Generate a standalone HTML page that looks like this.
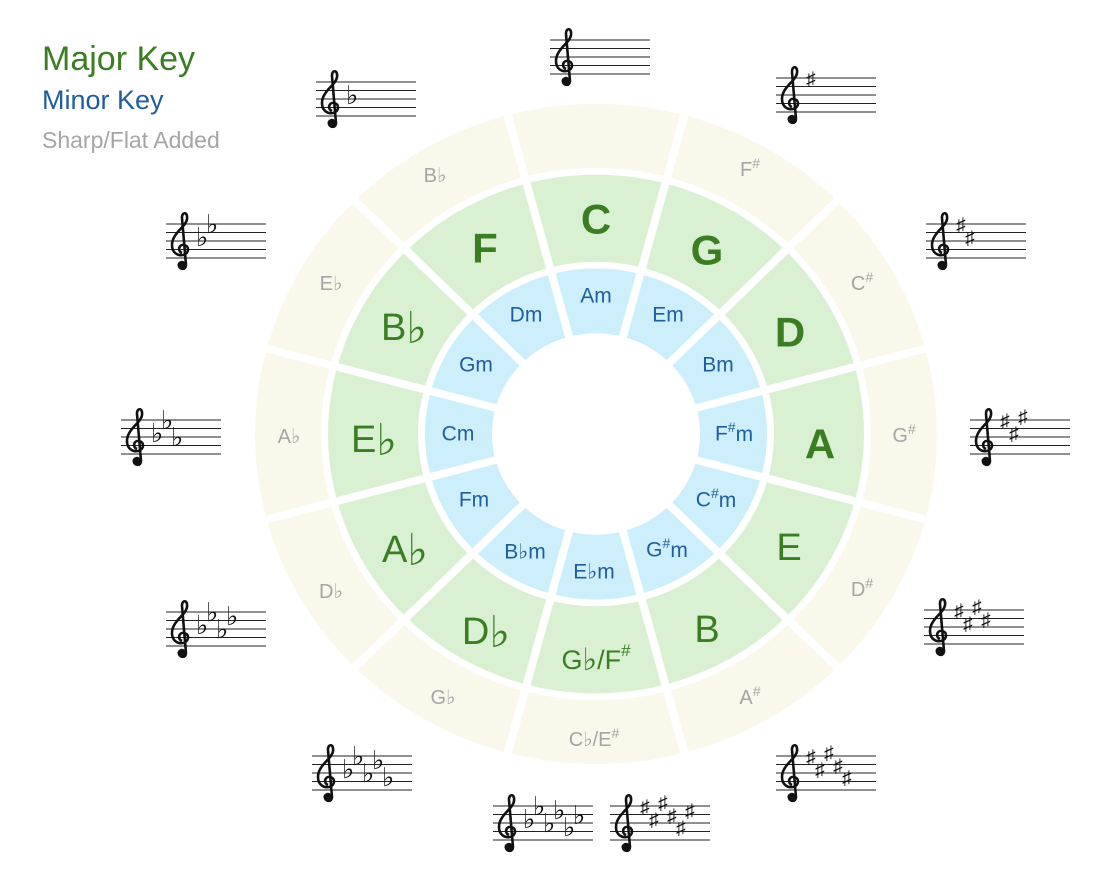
<!DOCTYPE html>
<html><head><meta charset="utf-8"><style>
html,body{margin:0;padding:0;background:#fff;}
body{width:1120px;height:879px;position:relative;overflow:hidden;font-family:"Liberation Sans","DejaVu Sans",sans-serif;}
.lg{position:absolute;left:42px;white-space:nowrap;}
svg text{font-family:"Liberation Sans","DejaVu Sans",sans-serif;}
</style></head><body>
<div class="lg" style="top:40px;font-size:34px;color:#3a7d22;">Major Key</div>
<div class="lg" style="top:85px;font-size:27px;color:#1f5e9e;">Minor Key</div>
<div class="lg" style="top:127px;font-size:23px;color:#a5a5a5;">Sharp/Flat Added</div>
<svg width="1120" height="879" style="position:absolute;left:0;top:0">
<defs>
<g id="staff">
<g stroke="#222" stroke-width="1.1"><line x1="0" y1="0" x2="100" y2="0"/><line x1="0" y1="8.5" x2="100" y2="8.5"/><line x1="0" y1="17" x2="100" y2="17"/><line x1="0" y1="25.5" x2="100" y2="25.5"/><line x1="0" y1="34" x2="100" y2="34"/></g>
<path d="M15 43 C18 44 20 41 18 39 C16 37 12 39 13 42 C14 46 20 46 20 41 L16 -6 C15.5 -12 22 -13 21 -5 C20 3 6 9 6 21 C6 29 12 32 17 31 C23 30 24 22 18 21 C13 20 11 27 16 29" fill="none" stroke="#111" stroke-width="2.6"/>
<circle cx="15.5" cy="42" r="3.2" fill="#111"/>
</g>
</defs>
<g transform="translate(596,434) scale(1,0.968)">
<circle r="341" fill="#faf8ea"/><circle r="275" fill="#fff"/>
<circle r="268" fill="#d9f1d2"/><circle r="178" fill="#fff"/>
<circle r="171" fill="#cdeefb"/><circle r="104" fill="#fff"/>
<g stroke="#fff" stroke-width="8">
<line x1="0" y1="-100" x2="0" y2="-350" transform="rotate(15)"/><line x1="0" y1="-100" x2="0" y2="-350" transform="rotate(45)"/><line x1="0" y1="-100" x2="0" y2="-350" transform="rotate(75)"/><line x1="0" y1="-100" x2="0" y2="-350" transform="rotate(105)"/><line x1="0" y1="-100" x2="0" y2="-350" transform="rotate(135)"/><line x1="0" y1="-100" x2="0" y2="-350" transform="rotate(165)"/><line x1="0" y1="-100" x2="0" y2="-350" transform="rotate(195)"/><line x1="0" y1="-100" x2="0" y2="-350" transform="rotate(225)"/><line x1="0" y1="-100" x2="0" y2="-350" transform="rotate(255)"/><line x1="0" y1="-100" x2="0" y2="-350" transform="rotate(285)"/><line x1="0" y1="-100" x2="0" y2="-350" transform="rotate(315)"/><line x1="0" y1="-100" x2="0" y2="-350" transform="rotate(345)"/>
</g>
</g>
<g fill="#3a7d22" text-anchor="middle" dominant-baseline="central">
<g font-size="42" font-weight="bold">
<text x="596" y="219">C</text><text x="707" y="250">G</text><text x="790" y="332">D</text><text x="820" y="444">A</text><text x="485" y="248">F</text>
</g>
<g font-size="38">
<text x="789" y="548">E</text><text x="707" y="630">B</text><text x="596" y="660" font-size="27">G<tspan font-family="DejaVu Sans" font-weight="bold" font-size="31">♭</tspan>/F<tspan font-size="17" dy="-10">#</tspan></text>
<text x="486" y="632">D<tspan font-family="DejaVu Sans" font-weight="bold" font-size="44">♭</tspan></text><text x="405" y="550">A<tspan font-family="DejaVu Sans" font-weight="bold" font-size="44">♭</tspan></text><text x="374" y="440">E<tspan font-family="DejaVu Sans" font-weight="bold" font-size="44">♭</tspan></text><text x="404" y="328">B<tspan font-family="DejaVu Sans" font-weight="bold" font-size="44">♭</tspan></text>
</g>
</g>
<g fill="#1f5e9e" text-anchor="middle" dominant-baseline="central" font-size="21">
<text x="596" y="296">Am</text><text x="668" y="315">Em</text><text x="718" y="365">Bm</text><text x="734" y="434">F<tspan font-size="14" dy="-7">#</tspan><tspan dy="7">m</tspan></text>
<text x="716" y="500">C<tspan font-size="14" dy="-7">#</tspan><tspan dy="7">m</tspan></text><text x="667" y="550">G<tspan font-size="14" dy="-7">#</tspan><tspan dy="7">m</tspan></text>
<text x="594" y="572">E♭m</text><text x="525" y="552">B♭m</text><text x="474" y="500">Fm</text><text x="458" y="434">Cm</text><text x="476" y="365">Gm</text><text x="526" y="315">Dm</text>
</g>
<g fill="#a5a5a5" text-anchor="middle" dominant-baseline="central" font-size="20">
<text x="750" y="170">F<tspan font-size="14" dy="-7">#</tspan></text><text x="862" y="284">C<tspan font-size="14" dy="-7">#</tspan></text><text x="904" y="436">G<tspan font-size="14" dy="-7">#</tspan></text><text x="862" y="590">D<tspan font-size="14" dy="-7">#</tspan></text><text x="750" y="698">A<tspan font-size="14" dy="-7">#</tspan></text>
<text x="594" y="740">C♭/E<tspan font-size="14" dy="-7">#</tspan></text><text x="443" y="698">G♭</text><text x="331" y="592">D♭</text><text x="289" y="437">A♭</text><text x="331" y="284">E♭</text><text x="435" y="176">B♭</text>
</g>
<g font-family="DejaVu Sans" font-size="26" fill="#111">
<use href="#staff" x="550" y="40"/>
<use href="#staff" x="316" y="82"/><text x="346" y="104">♭</text>
<use href="#staff" x="166" y="224"/><text x="196" y="246">♭</text><text x="206" y="233">♭</text>
<use href="#staff" x="121" y="420"/><text x="151" y="442">♭</text><text x="161" y="429">♭</text><text x="171" y="446">♭</text>
<use href="#staff" x="166" y="612"/><text x="196" y="634">♭</text><text x="206" y="621">♭</text><text x="216" y="638">♭</text><text x="226" y="625">♭</text>
<use href="#staff" x="312" y="756"/><text x="342" y="778">♭</text><text x="352" y="765">♭</text><text x="362" y="782">♭</text><text x="372" y="769">♭</text><text x="382" y="786">♭</text>
<use href="#staff" x="493" y="806"/><text x="523" y="828">♭</text><text x="533" y="815">♭</text><text x="543" y="832">♭</text><text x="553" y="819">♭</text><text x="563" y="836">♭</text><text x="573" y="824">♭</text>
</g>
<g font-family="DejaVu Sans" font-size="19" fill="#111">
<use href="#staff" x="776" y="78"/><text x="806" y="85">♯</text>
<use href="#staff" x="926" y="224"/><text x="956" y="231">♯</text><text x="965" y="244">♯</text>
<use href="#staff" x="970" y="420"/><text x="1000" y="427">♯</text><text x="1009" y="440">♯</text><text x="1018" y="423">♯</text>
<use href="#staff" x="924" y="610"/><text x="954" y="617">♯</text><text x="963" y="630">♯</text><text x="972" y="613">♯</text><text x="981" y="626">♯</text>
<use href="#staff" x="776" y="756"/><text x="806" y="763">♯</text><text x="815" y="776">♯</text><text x="824" y="759">♯</text><text x="833" y="772">♯</text><text x="842" y="784">♯</text>
<use href="#staff" x="610" y="806"/><text x="640" y="813">♯</text><text x="649" y="826">♯</text><text x="658" y="809">♯</text><text x="667" y="822">♯</text><text x="676" y="834">♯</text><text x="685" y="817">♯</text>
</g>
</svg>
</body></html>
